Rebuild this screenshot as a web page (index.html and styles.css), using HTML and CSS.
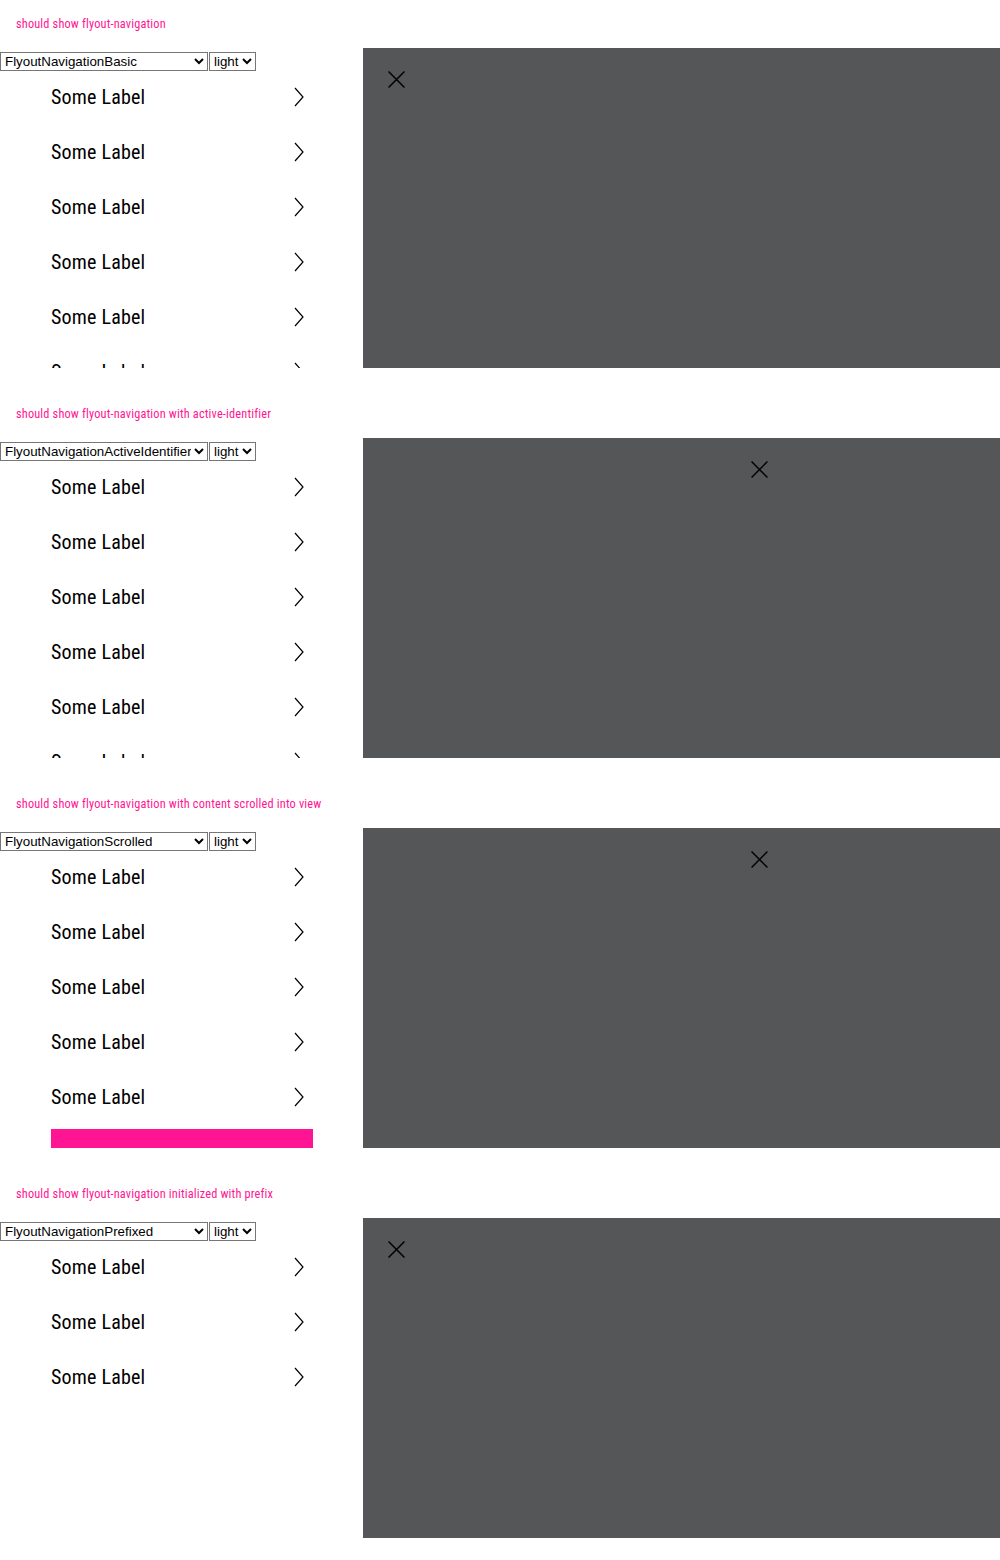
FILE: index.html
```html
<!DOCTYPE html>
<html>
<head>
<meta charset="utf-8">
<link rel="stylesheet" href="styles.css">
</head>
<body>
<div class="page">

  <section class="demo">
    <div class="title">should show flyout-navigation</div>
    <div class="stage">
      <div class="left">
        <div class="toolbar">
          <select class="sel-main"><option>FlyoutNavigationBasic</option></select><select class="sel-theme"><option>light</option></select>
        </div>
        <ul class="nav">
          <li class="item"><span>Some Label</span><svg class="chev" viewBox="0 0 10 20"><path d="M1 1 L9 10 L1 19"/></svg></li>
          <li class="item"><span>Some Label</span><svg class="chev" viewBox="0 0 10 20"><path d="M1 1 L9 10 L1 19"/></svg></li>
          <li class="item"><span>Some Label</span><svg class="chev" viewBox="0 0 10 20"><path d="M1 1 L9 10 L1 19"/></svg></li>
          <li class="item"><span>Some Label</span><svg class="chev" viewBox="0 0 10 20"><path d="M1 1 L9 10 L1 19"/></svg></li>
          <li class="item"><span>Some Label</span><svg class="chev" viewBox="0 0 10 20"><path d="M1 1 L9 10 L1 19"/></svg></li>
          <li class="item"><span>Some Label</span><svg class="chev" viewBox="0 0 10 20"><path d="M1 1 L9 10 L1 19"/></svg></li>
        </ul>
      </div>
      <div class="panel">
        <svg class="close close-left" viewBox="0 0 16 16"><path d="M0.5 0.5 L15.5 15.5 M15.5 0.5 L0.5 15.5"/></svg>
      </div>
    </div>
  </section>

  <section class="demo">
    <div class="title">should show flyout-navigation with active-identifier</div>
    <div class="stage">
      <div class="left">
        <div class="toolbar">
          <select class="sel-main"><option>FlyoutNavigationActiveIdentifier</option></select><select class="sel-theme"><option>light</option></select>
        </div>
        <ul class="nav">
          <li class="item"><span>Some Label</span><svg class="chev" viewBox="0 0 10 20"><path d="M1 1 L9 10 L1 19"/></svg></li>
          <li class="item"><span>Some Label</span><svg class="chev" viewBox="0 0 10 20"><path d="M1 1 L9 10 L1 19"/></svg></li>
          <li class="item"><span>Some Label</span><svg class="chev" viewBox="0 0 10 20"><path d="M1 1 L9 10 L1 19"/></svg></li>
          <li class="item"><span>Some Label</span><svg class="chev" viewBox="0 0 10 20"><path d="M1 1 L9 10 L1 19"/></svg></li>
          <li class="item"><span>Some Label</span><svg class="chev" viewBox="0 0 10 20"><path d="M1 1 L9 10 L1 19"/></svg></li>
          <li class="item"><span>Some Label</span><svg class="chev" viewBox="0 0 10 20"><path d="M1 1 L9 10 L1 19"/></svg></li>
        </ul>
      </div>
      <div class="panel">
        <svg class="close close-mid" viewBox="0 0 16 16"><path d="M0.5 0.5 L15.5 15.5 M15.5 0.5 L0.5 15.5"/></svg>
      </div>
    </div>
  </section>

  <section class="demo">
    <div class="title">should show flyout-navigation with content scrolled into view</div>
    <div class="stage">
      <div class="left">
        <div class="toolbar">
          <select class="sel-main"><option>FlyoutNavigationScrolled</option></select><select class="sel-theme"><option>light</option></select>
        </div>
        <ul class="nav">
          <li class="item"><span>Some Label</span><svg class="chev" viewBox="0 0 10 20"><path d="M1 1 L9 10 L1 19"/></svg></li>
          <li class="item"><span>Some Label</span><svg class="chev" viewBox="0 0 10 20"><path d="M1 1 L9 10 L1 19"/></svg></li>
          <li class="item"><span>Some Label</span><svg class="chev" viewBox="0 0 10 20"><path d="M1 1 L9 10 L1 19"/></svg></li>
          <li class="item"><span>Some Label</span><svg class="chev" viewBox="0 0 10 20"><path d="M1 1 L9 10 L1 19"/></svg></li>
          <li class="item"><span>Some Label</span><svg class="chev" viewBox="0 0 10 20"><path d="M1 1 L9 10 L1 19"/></svg></li>
        </ul>
        <div class="scroll-target"></div>
      </div>
      <div class="panel">
        <svg class="close close-mid" viewBox="0 0 16 16"><path d="M0.5 0.5 L15.5 15.5 M15.5 0.5 L0.5 15.5"/></svg>
      </div>
    </div>
  </section>

  <section class="demo">
    <div class="title">should show flyout-navigation initialized with prefix</div>
    <div class="stage">
      <div class="left">
        <div class="toolbar">
          <select class="sel-main"><option>FlyoutNavigationPrefixed</option></select><select class="sel-theme"><option>light</option></select>
        </div>
        <ul class="nav">
          <li class="item"><span>Some Label</span><svg class="chev" viewBox="0 0 10 20"><path d="M1 1 L9 10 L1 19"/></svg></li>
          <li class="item"><span>Some Label</span><svg class="chev" viewBox="0 0 10 20"><path d="M1 1 L9 10 L1 19"/></svg></li>
          <li class="item"><span>Some Label</span><svg class="chev" viewBox="0 0 10 20"><path d="M1 1 L9 10 L1 19"/></svg></li>
        </ul>
      </div>
      <div class="panel">
        <svg class="close close-left" viewBox="0 0 16 16"><path d="M0.5 0.5 L15.5 15.5 M15.5 0.5 L0.5 15.5"/></svg>
      </div>
    </div>
  </section>

</div>
</body>
</html>
```

FILE: styles.css
```css
html, body {
  margin: 0;
  padding: 0;
  background: #ffffff;
}

.page {
  width: 1000px;
}

.demo {
  height: 390px;
  display: flex;
  flex-direction: column;
}

.title {
  height: 48px;
  box-sizing: border-box;
  padding: 17px 0 0 16px;
  font-family: Roboto, "Liberation Sans", sans-serif;
  font-stretch: condensed;
  font-size: 12.3px;
  letter-spacing: 0.17px;
  line-height: 14px;
  color: #ff1493;
}

.stage {
  display: flex;
  height: 320px;
}

.left {
  width: 363px;
  height: 320px;
  overflow: hidden;
  box-sizing: border-box;
  padding-top: 4px;
}

.toolbar {
  display: flex;
  height: 18px;
}

.toolbar select {
  font-family: "Liberation Sans", Arial, sans-serif;
  font-size: 13.33px;
  height: 19px;
  margin: 0;
  color: #000;
  background: #fff;
  border: 1px solid #767676;
  border-radius: 0;
  padding: 0;
}

.sel-main {
  width: 208px;
}

.sel-theme {
  width: 47px;
  margin-left: 1px !important;
}

.nav {
  list-style: none;
  margin: -1px 0 0 0;
  padding: 0 0 0 51px;
  width: 262px;
}

.item {
  height: 55px;
  display: flex;
  align-items: center;
  justify-content: space-between;
  padding-right: 9px;
  font-family: Roboto, "Liberation Sans", sans-serif;
  font-stretch: condensed;
  font-weight: 400;
  font-size: 20px;
  letter-spacing: 0.2px;
  color: #000;
}

.chev {
  width: 10px;
  height: 20px;
  fill: none;
  stroke: #000;
  stroke-width: 1.2;
}

.scroll-target {
  margin: 5px 0 0 51px;
  width: 262px;
  height: 19px;
  background: #ff1493;
}

.panel {
  width: 637px;
  height: 320px;
  background: #555658;
  position: relative;
}

.close {
  position: absolute;
  width: 17px;
  height: 17px;
  fill: none;
  stroke: #000;
  stroke-width: 1.4;
}

.close-left {
  left: 25px;
  top: 23px;
}

.close-mid {
  left: 388px;
  top: 23px;
}
```
